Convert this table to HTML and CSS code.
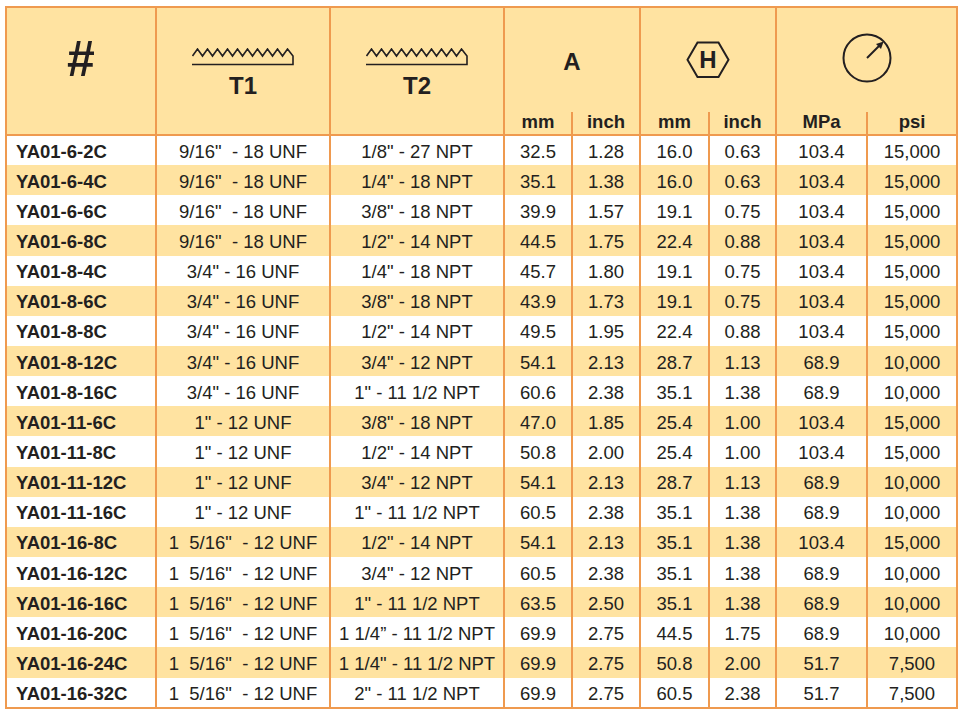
FILE: index.html
```html
<!DOCTYPE html>
<html lang="en">
<head>
<meta charset="utf-8">
<title>YA01 adapter specifications</title>
<link rel="stylesheet" href="styles.css">
</head>
<body>
<table class="spec">
  <colgroup>
    <col class="c-id"><col class="c-thread"><col class="c-thread">
    <col class="c-a"><col class="c-a"><col class="c-h1"><col class="c-h2">
    <col class="c-p"><col class="c-p2">
  </colgroup>
  <thead>
    <tr class="hdr-main">
      <th rowspan="2" class="h-hash">#</th>
      <th rowspan="2" class="h-thread">
        <svg class="thread" width="104" height="18" viewBox="0 0 104 18" aria-hidden="true"><path d="M1.5 8 L6.5 1 L11.5 8 L16.5 1 L21.5 8 L26.5 1 L31.5 8 L36.5 1 L41.5 8 L46.5 1 L51.5 8 L56.5 1 L61.5 8 L66.5 1 L71.5 8 L76.5 1 L81.5 8 L86.5 1 L91.5 8 L96.5 1 L102 8 L102 16.5 L1 16.5"/></svg>
        <span class="t-label">T1</span>
      </th>
      <th rowspan="2" class="h-thread">
        <svg class="thread" width="104" height="18" viewBox="0 0 104 18" aria-hidden="true"><path d="M1.5 8 L6.5 1 L11.5 8 L16.5 1 L21.5 8 L26.5 1 L31.5 8 L36.5 1 L41.5 8 L46.5 1 L51.5 8 L56.5 1 L61.5 8 L66.5 1 L71.5 8 L76.5 1 L81.5 8 L86.5 1 L91.5 8 L96.5 1 L102 8 L102 16.5 L1 16.5"/></svg>
        <span class="t-label">T2</span>
      </th>
      <th colspan="2" class="h-group"><span class="a-label">A</span></th>
      <th colspan="2" class="h-group">
        <svg class="hex" width="44" height="38" viewBox="0 0 44 38"><polygon points="1.5,18.75 11.5,1.5 32.5,1.5 42.5,18.75 32.5,36 11.5,36"/><text x="22" y="27.4" text-anchor="middle">H</text></svg>
      </th>
      <th colspan="2" class="h-group">
        <svg class="gauge" width="52" height="52" viewBox="0 0 52 52" aria-hidden="true"><circle cx="26" cy="26" r="23.5"/><line x1="26" y1="26" x2="38" y2="14"/><polygon points="42.6,9.4 40,17 35,12"/></svg>
      </th>
    </tr>
    <tr class="hdr-sub">
      <th>mm</th><th>inch</th><th>mm</th><th>inch</th><th>MPa</th><th>psi</th>
    </tr>
  </thead>
  <tbody>
    <tr><td class="id">YA01-6-2C</td><td>9/16"  - 18 UNF</td><td>1/8" - 27 NPT</td><td>32.5</td><td>1.28</td><td>16.0</td><td>0.63</td><td>103.4</td><td>15,000</td></tr>
    <tr><td class="id">YA01-6-4C</td><td>9/16"  - 18 UNF</td><td>1/4" - 18 NPT</td><td>35.1</td><td>1.38</td><td>16.0</td><td>0.63</td><td>103.4</td><td>15,000</td></tr>
    <tr><td class="id">YA01-6-6C</td><td>9/16"  - 18 UNF</td><td>3/8" - 18 NPT</td><td>39.9</td><td>1.57</td><td>19.1</td><td>0.75</td><td>103.4</td><td>15,000</td></tr>
    <tr><td class="id">YA01-6-8C</td><td>9/16"  - 18 UNF</td><td>1/2" - 14 NPT</td><td>44.5</td><td>1.75</td><td>22.4</td><td>0.88</td><td>103.4</td><td>15,000</td></tr>
    <tr><td class="id">YA01-8-4C</td><td>3/4" - 16 UNF</td><td>1/4" - 18 NPT</td><td>45.7</td><td>1.80</td><td>19.1</td><td>0.75</td><td>103.4</td><td>15,000</td></tr>
    <tr><td class="id">YA01-8-6C</td><td>3/4" - 16 UNF</td><td>3/8" - 18 NPT</td><td>43.9</td><td>1.73</td><td>19.1</td><td>0.75</td><td>103.4</td><td>15,000</td></tr>
    <tr><td class="id">YA01-8-8C</td><td>3/4" - 16 UNF</td><td>1/2" - 14 NPT</td><td>49.5</td><td>1.95</td><td>22.4</td><td>0.88</td><td>103.4</td><td>15,000</td></tr>
    <tr><td class="id">YA01-8-12C</td><td>3/4" - 16 UNF</td><td>3/4" - 12 NPT</td><td>54.1</td><td>2.13</td><td>28.7</td><td>1.13</td><td>68.9</td><td>10,000</td></tr>
    <tr><td class="id">YA01-8-16C</td><td>3/4" - 16 UNF</td><td>1" - 11 1/2 NPT</td><td>60.6</td><td>2.38</td><td>35.1</td><td>1.38</td><td>68.9</td><td>10,000</td></tr>
    <tr><td class="id">YA01-11-6C</td><td>1" - 12 UNF</td><td>3/8" - 18 NPT</td><td>47.0</td><td>1.85</td><td>25.4</td><td>1.00</td><td>103.4</td><td>15,000</td></tr>
    <tr><td class="id">YA01-11-8C</td><td>1" - 12 UNF</td><td>1/2" - 14 NPT</td><td>50.8</td><td>2.00</td><td>25.4</td><td>1.00</td><td>103.4</td><td>15,000</td></tr>
    <tr><td class="id">YA01-11-12C</td><td>1" - 12 UNF</td><td>3/4" - 12 NPT</td><td>54.1</td><td>2.13</td><td>28.7</td><td>1.13</td><td>68.9</td><td>10,000</td></tr>
    <tr><td class="id">YA01-11-16C</td><td>1" - 12 UNF</td><td>1" - 11 1/2 NPT</td><td>60.5</td><td>2.38</td><td>35.1</td><td>1.38</td><td>68.9</td><td>10,000</td></tr>
    <tr><td class="id">YA01-16-8C</td><td>1  5/16"  - 12 UNF</td><td>1/2" - 14 NPT</td><td>54.1</td><td>2.13</td><td>35.1</td><td>1.38</td><td>103.4</td><td>15,000</td></tr>
    <tr><td class="id">YA01-16-12C</td><td>1  5/16"  - 12 UNF</td><td>3/4" - 12 NPT</td><td>60.5</td><td>2.38</td><td>35.1</td><td>1.38</td><td>68.9</td><td>10,000</td></tr>
    <tr><td class="id">YA01-16-16C</td><td>1  5/16"  - 12 UNF</td><td>1" - 11 1/2 NPT</td><td>63.5</td><td>2.50</td><td>35.1</td><td>1.38</td><td>68.9</td><td>10,000</td></tr>
    <tr><td class="id">YA01-16-20C</td><td>1  5/16"  - 12 UNF</td><td>1 1/4” - 11 1/2 NPT</td><td>69.9</td><td>2.75</td><td>44.5</td><td>1.75</td><td>68.9</td><td>10,000</td></tr>
    <tr><td class="id">YA01-16-24C</td><td>1  5/16"  - 12 UNF</td><td>1 1/4" - 11 1/2 NPT</td><td>69.9</td><td>2.75</td><td>50.8</td><td>2.00</td><td>51.7</td><td>7,500</td></tr>
    <tr><td class="id">YA01-16-32C</td><td>1  5/16"  - 12 UNF</td><td>2" - 11 1/2 NPT</td><td>69.9</td><td>2.75</td><td>60.5</td><td>2.38</td><td>51.7</td><td>7,500</td></tr>
  </tbody>
</table>
</body>
</html>
```

FILE: styles.css
```css
html, body {
  margin: 0;
  padding: 0;
  background: #ffffff;
}

body {
  font-family: "Liberation Sans", Arial, sans-serif;
  color: #231f20;
}

.spec {
  border-collapse: collapse;
  table-layout: fixed;
  width: 951px;
  margin: 6px 0 0 5px;
  border: 2px solid #ef9a4f;
}

.c-id { width: 150px; }
.c-thread { width: 174px; }
.c-a { width: 68px; }
.c-h1 { width: 69px; }
.c-h2 { width: 67px; }
.c-p { width: 91px; }
.c-p2 { width: 90px; }

.spec th,
.spec td {
  padding: 0;
  border-left: 2px solid #ef9a4f;
  border-right: 2px solid #ef9a4f;
  text-align: center;
}

.spec th {
  background: #ffe3a1;
  font-weight: bold;
  white-space: nowrap;
}

.spec td {
  white-space: pre;
}

.hdr-main {
  height: 105px;
}

.hdr-main th {
  vertical-align: middle;
}

.h-hash {
  font-size: 50px;
  line-height: 1;
  border-bottom: 2px solid #ef9a4f;
}

.hdr-main th.h-hash {
  vertical-align: top;
  padding-top: 26px;
}

.h-thread {
  border-bottom: 2px solid #ef9a4f;
}

.hdr-main th.h-thread {
  vertical-align: top;
  padding-top: 40px;
}

.thread {
  display: block;
  margin: 0 auto;
  fill: none;
  stroke: #231f20;
  stroke-width: 1.6;
  stroke-linejoin: miter;
}

.t-label {
  display: block;
  font-size: 24px;
  line-height: 28px;
  margin-top: 6px;
}

.a-label {
  font-size: 24px;
  line-height: 28px;
  display: inline-block;
  padding-top: 4px;
}

.hex {
  display: block;
  margin: 0 auto;
  overflow: visible;
}

.hex polygon {
  fill: none;
  stroke: #231f20;
  stroke-width: 2;
}

.hex text {
  font-family: "Liberation Sans", Arial, sans-serif;
  font-weight: bold;
  font-size: 24px;
  fill: #231f20;
}

.gauge {
  display: block;
  margin: 0 auto 4px;
  overflow: visible;
}

.gauge circle,
.gauge line {
  fill: none;
  stroke: #231f20;
  stroke-width: 2;
}

.gauge polygon {
  fill: #231f20;
}

.hdr-sub {
  height: 23px;
}

.hdr-sub th {
  font-size: 18.5px;
  line-height: 20px;
  vertical-align: bottom;
  padding-bottom: 2px;
  border-bottom: 2px solid #ef9a4f;
}

.spec tbody tr {
  height: 30.15px;
}

.spec td {
  font-size: 18.5px;
  line-height: 20px;
  padding-top: 3px;
  vertical-align: middle;
  background: #ffffff;
}

.spec tbody tr:nth-child(even) td {
  background: #ffe3a1;
}

.spec td.id {
  text-align: left;
  padding-left: 9px;
  font-weight: bold;
}
```
